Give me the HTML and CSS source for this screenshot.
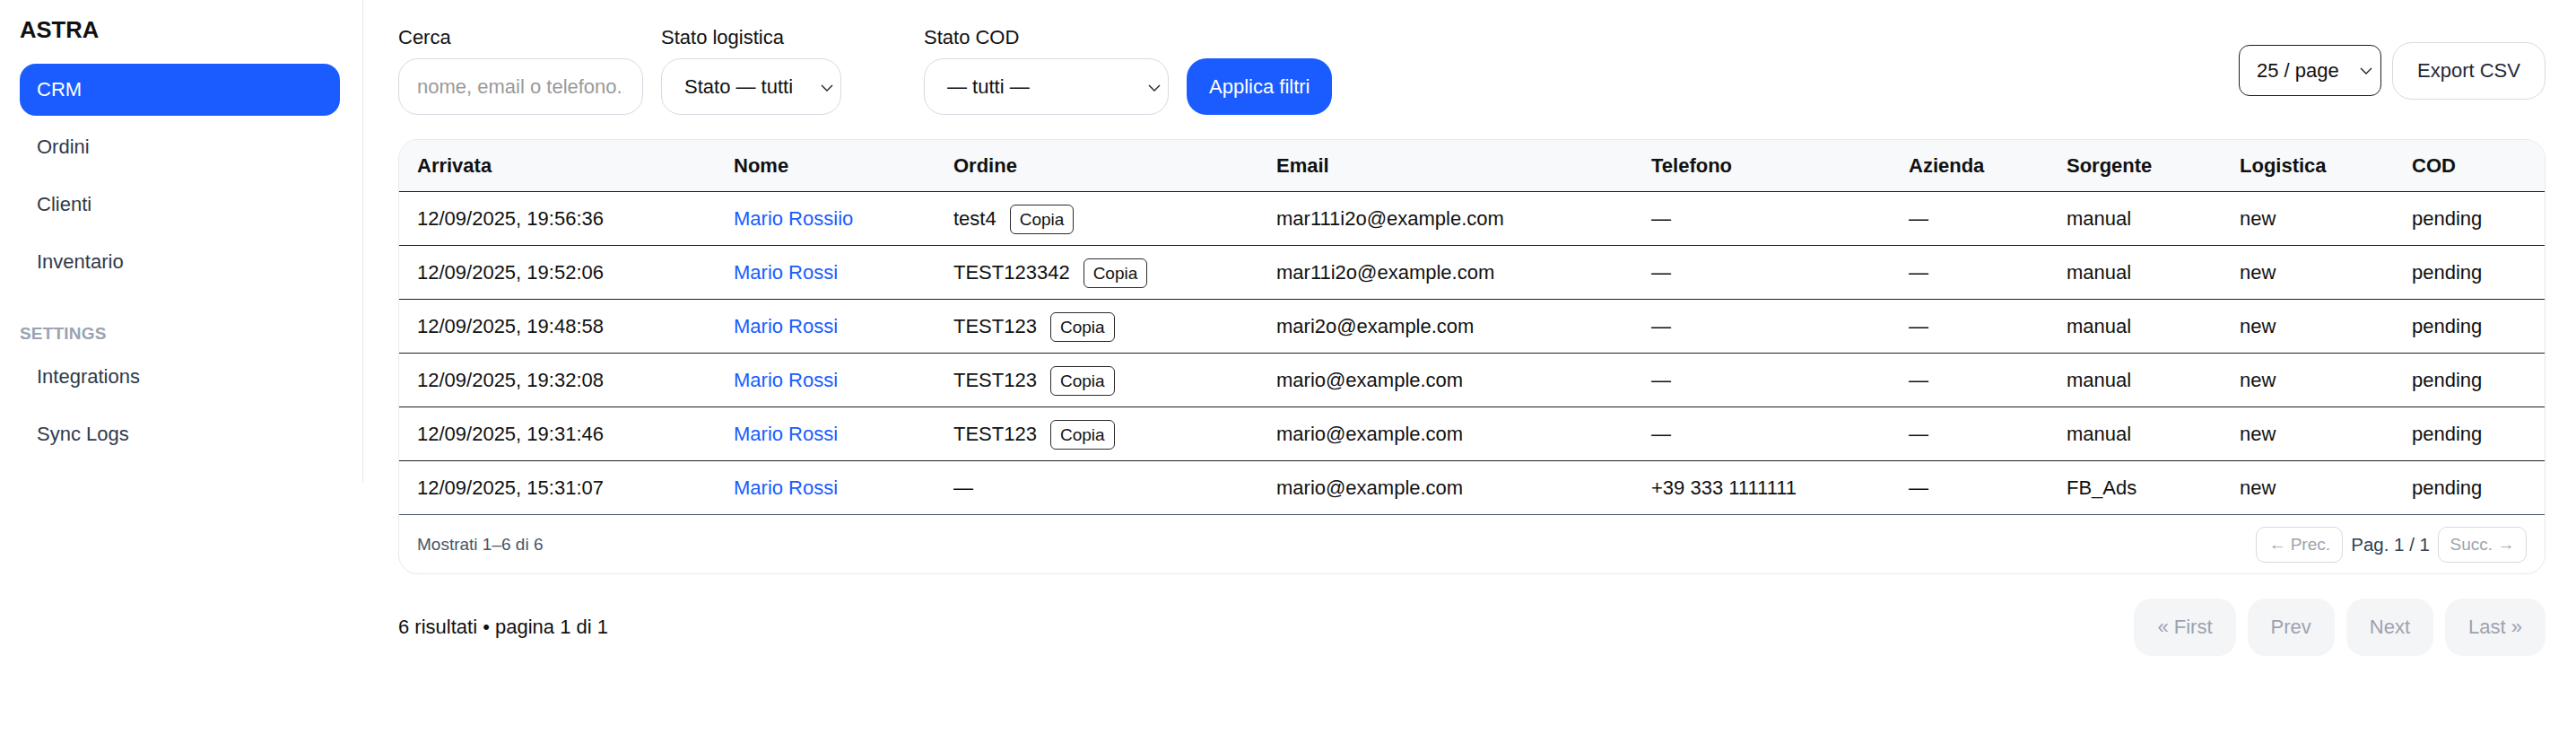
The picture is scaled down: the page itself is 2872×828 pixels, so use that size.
FILE: index.html
```html
<!DOCTYPE html>
<html lang="it">
<head>
<meta charset="utf-8">
<title>ASTRA – CRM</title>
<link rel="stylesheet" href="styles.css">
</head>
<body>
<div class="app">
  <aside class="sidebar">
    <div class="brand">ASTRA</div>
    <nav class="nav">
      <a class="nav-item active" href="#">CRM</a>
      <a class="nav-item" href="#">Ordini</a>
      <a class="nav-item" href="#">Clienti</a>
      <a class="nav-item" href="#">Inventario</a>
    </nav>
    <div class="nav-section">SETTINGS</div>
    <nav class="nav">
      <a class="nav-item" href="#">Integrations</a>
      <a class="nav-item" href="#">Sync Logs</a>
    </nav>
  </aside>

  <main class="main">
    <div class="toolbar">
      <form class="filters">
        <label class="field">
          <span class="field-label">Cerca</span>
          <input class="input" type="text" placeholder="nome, email o telefono...">
        </label>
        <div class="field">
          <span class="field-label">Stato logistica</span>
          <div class="select-wrap select-auto">
            <select class="select"><option>Stato — tutti</option></select>
            <svg class="chev" width="14" height="8" viewBox="0 0 14 8"><polyline points="1,1 7,7 13,1" fill="none" stroke="#222" stroke-width="1.4"/></svg>
          </div>
        </div>
        <div class="field">
          <span class="field-label">Stato COD</span>
          <div class="select-wrap">
            <select class="select"><option>— tutti —</option></select>
            <svg class="chev" width="14" height="8" viewBox="0 0 14 8"><polyline points="1,1 7,7 13,1" fill="none" stroke="#222" stroke-width="1.4"/></svg>
          </div>
        </div>
        <button class="btn-primary" type="button">Applica filtri</button>
      </form>
      <div class="toolbar-right">
        <div class="select-wrap per-page">
          <select class="select select-dark"><option>25 / page</option></select>
          <svg class="chev" width="14" height="8" viewBox="0 0 14 8"><polyline points="1,1 7,7 13,1" fill="none" stroke="#222" stroke-width="1.4"/></svg>
        </div>
        <button class="btn-outline" type="button">Export CSV</button>
      </div>
    </div>

    <div class="card">
      <table class="table">
        <colgroup>
          <col class="c-arr"><col class="c-nome"><col class="c-ord"><col class="c-mail"><col class="c-tel"><col class="c-az"><col class="c-src"><col class="c-log"><col class="c-cod">
        </colgroup>
        <thead>
          <tr><th>Arrivata</th><th>Nome</th><th>Ordine</th><th>Email</th><th>Telefono</th><th>Azienda</th><th>Sorgente</th><th>Logistica</th><th>COD</th></tr>
        </thead>
        <tbody>
          <tr><td>12/09/2025, 19:56:36</td><td><a class="link" href="#">Mario Rossiio</a></td><td><div class="ord">test4 <button class="copy" type="button">Copia</button></div></td><td>mar111i2o@example.com</td><td>—</td><td>—</td><td>manual</td><td>new</td><td>pending</td></tr>
          <tr><td>12/09/2025, 19:52:06</td><td><a class="link" href="#">Mario Rossi</a></td><td><div class="ord">TEST123342 <button class="copy" type="button">Copia</button></div></td><td>mar11i2o@example.com</td><td>—</td><td>—</td><td>manual</td><td>new</td><td>pending</td></tr>
          <tr><td>12/09/2025, 19:48:58</td><td><a class="link" href="#">Mario Rossi</a></td><td><div class="ord">TEST123 <button class="copy" type="button">Copia</button></div></td><td>mari2o@example.com</td><td>—</td><td>—</td><td>manual</td><td>new</td><td>pending</td></tr>
          <tr><td>12/09/2025, 19:32:08</td><td><a class="link" href="#">Mario Rossi</a></td><td><div class="ord">TEST123 <button class="copy" type="button">Copia</button></div></td><td>mario@example.com</td><td>—</td><td>—</td><td>manual</td><td>new</td><td>pending</td></tr>
          <tr><td>12/09/2025, 19:31:46</td><td><a class="link" href="#">Mario Rossi</a></td><td><div class="ord">TEST123 <button class="copy" type="button">Copia</button></div></td><td>mario@example.com</td><td>—</td><td>—</td><td>manual</td><td>new</td><td>pending</td></tr>
          <tr class="last"><td>12/09/2025, 15:31:07</td><td><a class="link" href="#">Mario Rossi</a></td><td><div class="ord">—</div></td><td>mario@example.com</td><td>+39 333 1111111</td><td>—</td><td>FB_Ads</td><td>new</td><td>pending</td></tr>
        </tbody>
      </table>
      <div class="card-footer">
        <span class="muted">Mostrati 1–6 di 6</span>
        <div class="mini-pager">
          <button class="mini-btn prev" type="button" disabled>← Prec.</button>
          <span class="page-info">Pag. 1 / 1</span>
          <button class="mini-btn next" type="button" disabled>Succ. →</button>
        </div>
      </div>
    </div>

    <div class="pager">
      <span class="results">6 risultati • pagina 1 di 1</span>
      <div class="pager-btns">
        <button class="pg-btn" type="button" disabled>« First</button>
        <button class="pg-btn" type="button" disabled>Prev</button>
        <button class="pg-btn" type="button" disabled>Next</button>
        <button class="pg-btn" type="button" disabled>Last »</button>
      </div>
    </div>
  </main>
</div>
</body>
</html>
```

FILE: styles.css
```css
* { box-sizing: border-box; }

html, body {
  margin: 0;
  padding: 0;
  background: #ffffff;
  font-family: "Liberation Sans", Arial, Helvetica, sans-serif;
  font-size: 22px;
  line-height: 26px;
  color: #111111;
}

.app {
  display: flex;
  align-items: flex-start;
}

/* Sidebar */
.sidebar {
  flex: 0 0 405px;
  width: 405px;
  padding: 18px 25px 25px 22px;
  border-right: 1px solid #e6e8ec;
}

.brand {
  font-size: 25.6px;
  line-height: 30px;
  font-weight: 700;
  color: #111111;
  margin-bottom: 23px;
}

.nav {
  display: flex;
  flex-direction: column;
  gap: 6px;
}

.nav-item {
  display: block;
  height: 58px;
  padding: 16px 19px;
  border-radius: 18px;
  color: #2f3a4b;
  text-decoration: none;
  font-size: 22px;
  line-height: 26px;
}

.nav-item.active {
  background: #1a5cff;
  color: #ffffff;
}

.nav-section {
  margin: 39px 0 7px;
  font-size: 19px;
  line-height: 24px;
  font-weight: 700;
  color: #9aa3b2;
  letter-spacing: 0.2px;
}

/* Main */
.main {
  flex: 1;
  min-width: 0;
  padding: 29px 34px 0 39px;
}

.toolbar {
  display: flex;
  align-items: center;
  justify-content: space-between;
}

.filters {
  display: flex;
  align-items: flex-end;
  gap: 20px;
  margin: 0;
}

.field {
  display: flex;
  flex-direction: column;
  gap: 10px;
  width: 273px;
}

.field-label {
  font-size: 22px;
  line-height: 26px;
  color: #111111;
}

.input {
  height: 63px;
  width: 100%;
  padding: 0 20px;
  border: 1px solid #d6dae1;
  border-radius: 22px;
  font-family: inherit;
  font-size: 22px;
  color: #111111;
  background: #ffffff;
  outline: none;
}

.input::placeholder { color: #9a9a9a; }

.select-wrap {
  position: relative;
  width: 100%;
}

.select-auto { width: 201px; }

.select {
  appearance: none;
  -webkit-appearance: none;
  width: 100%;
  height: 63px;
  padding: 0 30px 0 25px;
  border: 1px solid #d6dae1;
  border-radius: 22px;
  background: #ffffff;
  font-family: inherit;
  font-size: 22px;
  color: #111111;
  outline: none;
}

.chev {
  position: absolute;
  right: 9px;
  top: 50%;
  margin-top: -3px;
  pointer-events: none;
}

.btn-primary {
  height: 63px;
  padding: 0 25px;
  border: none;
  border-radius: 22px;
  background: #1a5cff;
  color: #ffffff;
  font-family: inherit;
  font-size: 22px;
}

.toolbar-right {
  display: flex;
  align-items: center;
  gap: 12px;
}

.per-page { width: 159px; }

.select-dark {
  height: 57px;
  padding: 0 30px 0 19px;
  border: 1px solid #1f1f1f;
  border-radius: 12px;
}

.per-page .chev { right: 10px; margin-top: -4px; }

.btn-outline {
  height: 64px;
  width: 171px;
  border: 1px solid #d6dae1;
  border-radius: 22px;
  background: #ffffff;
  color: #1f2937;
  font-family: inherit;
  font-size: 22px;
}

/* Card + table */
.card {
  margin-top: 27px;
  border: 1px solid #e6e8ec;
  border-radius: 22px;
  overflow: hidden;
  background: #ffffff;
}

.table {
  width: 100%;
  table-layout: fixed;
  border-collapse: separate;
  border-spacing: 0;
}

.c-arr { width: 353px; }
.c-nome { width: 245px; }
.c-ord { width: 360px; }
.c-mail { width: 418px; }
.c-tel { width: 287px; }
.c-az { width: 176px; }
.c-src { width: 193px; }
.c-log { width: 192px; }
.c-cod { width: auto; }

.table th {
  background: #f8f9fb;
  text-align: left;
  font-weight: 700;
  padding: 16px 20px 15px;
  border-bottom: 1px solid #1f1f1f;
  white-space: nowrap;
}

.table td {
  padding: 17px 20px 16px;
  border-bottom: 1px solid #1f1f1f;
  white-space: nowrap;
  vertical-align: middle;
}

.table tr.last td { border-bottom-color: #475569; }

.link {
  color: #1a5cff;
  text-decoration: none;
}

.ord {
  display: flex;
  align-items: center;
  gap: 15px;
  height: 26px;
}

.copy {
  height: 33px;
  padding: 0 10px;
  border: 1px solid #2b2b2b;
  border-radius: 6px;
  background: #ffffff;
  color: #111111;
  font-family: inherit;
  font-size: 19px;
  line-height: 31px;
}

.card-footer {
  display: flex;
  align-items: center;
  justify-content: space-between;
  padding: 13px 20px 12px;
}

.muted {
  font-size: 19px;
  line-height: 24px;
  color: #475569;
}

.mini-pager {
  display: flex;
  align-items: center;
  gap: 9px;
}

.mini-btn {
  height: 40px;
  padding: 0;
  border: 1px solid #d6dae1;
  border-radius: 10px;
  background: #ffffff;
  color: #9ca3af;
  font-family: inherit;
  font-size: 19px;
}

.mini-btn.prev { width: 97px; }
.mini-btn.next { width: 99px; }

.page-info {
  font-size: 20.5px;
  color: #334155;
}

/* Bottom pager */
.pager {
  margin-top: 27px;
  display: flex;
  align-items: center;
  justify-content: space-between;
}

.results {
  font-size: 22px;
  color: #111111;
}

.pager-btns {
  display: flex;
  gap: 13px;
}

.pg-btn {
  height: 64px;
  padding: 0 26px;
  border: none;
  border-radius: 20px;
  background: #f4f5f6;
  color: #9ca3af;
  font-family: inherit;
  font-size: 22px;
}
```
